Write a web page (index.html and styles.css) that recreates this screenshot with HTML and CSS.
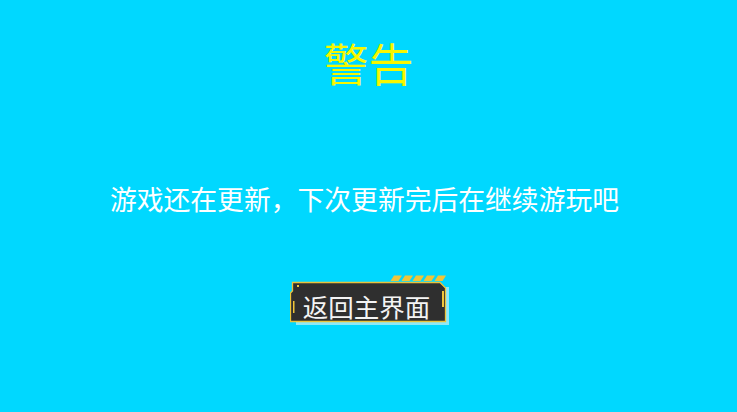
FILE: index.html
```html
<!DOCTYPE html>
<html lang="zh-CN">
<head>
    <meta charset="UTF-8">
    <meta name="viewport" content="width=device-width, initial-scale=1.0">
    <title>警告</title>
    <link rel="stylesheet" href="styles.css">
</head>
<body>
    <div class="notice">
        <h1 class="title">警告</h1>
        <p class="message">游戏还在更新，下次更新完后在继续游玩吧</p>
        <button class="back-button">
            <svg class="frame" viewBox="0 0 160 52" width="160" height="52">
                <!-- shadow -->
                <path d="M6,12 H159 V50 H6 Z" fill="#8ee8f7"/>
                <!-- body -->
                <path d="M2.5,7.5 H150 L155.5,13 V46.5 H0.5 V18 L2.5,16 Z"
                      fill="#2f2f2f" stroke="#e9c23c" stroke-width="1.3"/>
                <!-- stripes -->
                <path d="M104,0.5 H112 L108.5,6 H100.5 Z" fill="#f0c53a"/>
                <path d="M115,0.5 H123 L119.5,6 H111.5 Z" fill="#f0c53a"/>
                <path d="M126,0.5 H134 L130.5,6 H122.5 Z" fill="#f0c53a"/>
                <path d="M137,0.5 H145 L141.5,6 H133.5 Z" fill="#f0c53a"/>
                <path d="M148,0.5 H156 L152.5,6 H144.5 Z" fill="#f0c53a"/>
                <!-- side marks -->
                <rect x="152" y="16" width="2" height="16" fill="#f0c53a"/>
                <rect x="3" y="26" width="1.5" height="12" fill="#f0c53a"/>
                <rect x="7" y="10" width="2" height="2" fill="#f0c53a"/>
            </svg>
            <span class="label">返回主界面</span>
        </button>
    </div>
</body>
</html>
```

FILE: styles.css
```css
body {
    margin: 0;
    height: 100vh;
    background-color: #00d8ff;
    font-family: "Noto Sans CJK SC", "Noto Sans", sans-serif;
    overflow: hidden;
}

.notice {
    display: flex;
    flex-direction: column;
    align-items: center;
    padding-top: 40px;
}

.title {
    margin: 0;
    font-size: 45px;
    line-height: 45px;
    font-weight: 400;
    color: #f7f700;
}

.message {
    margin: 100px 8px 0 0;
    font-size: 26.8px;
    line-height: 27px;
    color: #ffffff;
}

/* Main menu button */
.back-button {
    position: relative;
    margin: 63px 0 0 2px;
    width: 160px;
    height: 52px;
    padding: 0;
    border: none;
    background: none;
    cursor: pointer;
    font-family: inherit;
}

.back-button .frame {
    position: absolute;
    left: 0;
    top: 0;
}

.back-button .label {
    position: relative;
    display: block;
    padding: 9px 6px 0 0;
    font-size: 25.5px;
    line-height: 30px;
    color: #f4f4f4;
}
```
